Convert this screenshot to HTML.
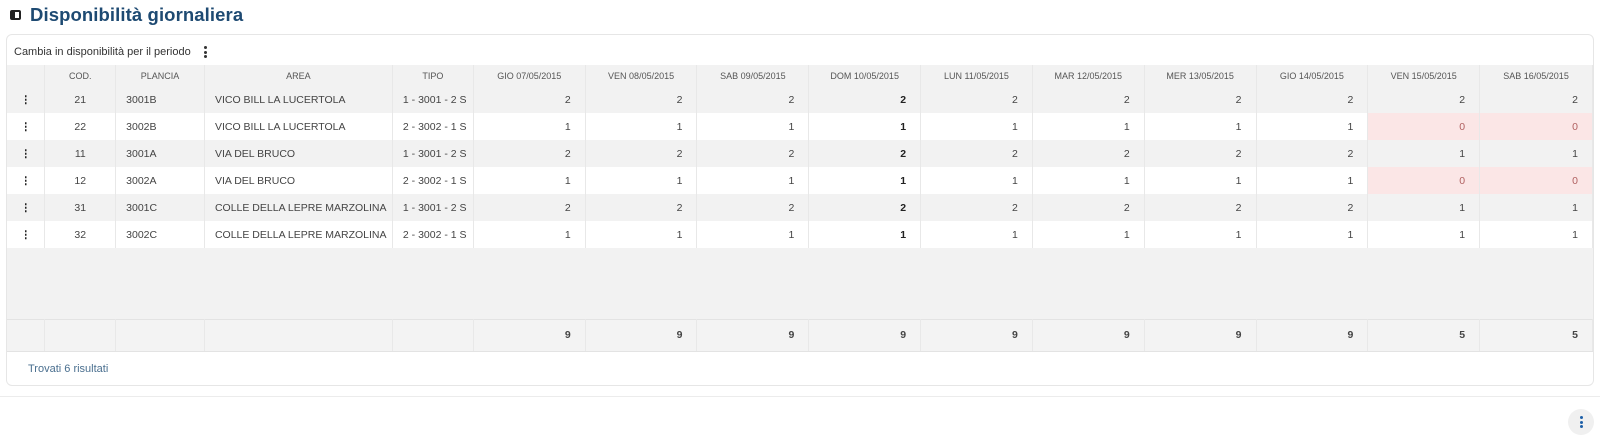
<!DOCTYPE html>
<html><head><meta charset="utf-8"><style>
*{box-sizing:border-box;margin:0;padding:0}
body{width:1600px;height:440px;background:#fff;font-family:"Liberation Sans",sans-serif;position:relative;overflow:hidden;color:#333}
.title{position:absolute;left:30px;top:4px;font-size:18.5px;color:#1e4a72;font-weight:bold;letter-spacing:0.1px}
.ticon{position:absolute;left:10px;top:10px;width:11px;height:10px;border:2px solid #222;border-radius:2px}
.ticon:after{content:"";position:absolute;left:0;top:0;width:3px;height:6px;background:#222}
.card{position:absolute;left:6px;top:34px;width:1588px;height:352px;border:1px solid #e6e6e6;border-radius:6px;background:#fff;overflow:hidden}
.sub{position:absolute;left:7px;top:11px;font-size:11px;color:#333}
.dots{position:absolute;width:3px}
.dots i{display:block;width:3px;height:3px;border-radius:50%;background:#333;margin-bottom:1.5px}
table{position:absolute;left:0;top:30px;border-collapse:collapse;table-layout:fixed;font-size:10.5px}
td,th{border-right:1px solid #e8e8e8;overflow:hidden;white-space:nowrap}
th{height:21px;background:#f2f2f2;font-weight:normal;color:#555;font-size:9px;text-align:center}
td{height:27px;color:#444}
tr.g td{background:#f2f2f2}
tr.w td{background:#fff}
td.n{text-align:right;padding-right:14px}
td.c{text-align:center}
td.l{padding-left:10px}
td.b{font-weight:bold;color:#222}
td.r{background:#fbe6e6!important;color:#b06060}
.foot td{height:32px;background:#f3f3f3;font-weight:bold;border-top:1px solid #e3e3e3;border-bottom:1px solid #e3e3e3}
.tro{position:absolute;left:21px;top:328px;font-size:11px;color:#4a6f8f}
.hr{position:absolute;left:0;top:396px;width:1600px;height:1px;background:#ececec}
.fab{position:absolute;left:1568px;top:409px;width:26px;height:26px;border-radius:50%;background:#f0f0f0}
</style></head><body>
<div class="ticon"></div>
<div class="title">Disponibilità giornaliera</div>
<div class="card">
<div class="sub">Cambia in disponibilità per il periodo</div>
<div class="dots" style="left:197px;top:11px"><i></i><i></i><i></i></div>
<table>
<colgroup><col style="width:38px"><col style="width:71px"><col style="width:89px"><col style="width:188px"><col style="width:81px"><col span="9" style="width:112px"><col style="width:113px"></colgroup>
<tr><th></th><th>COD.</th><th>PLANCIA</th><th>AREA</th><th>TIPO</th><th>GIO 07/05/2015</th><th>VEN 08/05/2015</th><th>SAB 09/05/2015</th><th>DOM 10/05/2015</th><th>LUN 11/05/2015</th><th>MAR 12/05/2015</th><th>MER 13/05/2015</th><th>GIO 14/05/2015</th><th>VEN 15/05/2015</th><th>SAB 16/05/2015</th></tr>
<tr class="g"><td class="c b">⋮</td><td class="c">21</td><td class="l">3001B</td><td class="l">VICO BILL LA LUCERTOLA</td><td class="l">1 - 3001 - 2 S</td><td class="n">2</td><td class="n">2</td><td class="n">2</td><td class="n b">2</td><td class="n">2</td><td class="n">2</td><td class="n">2</td><td class="n">2</td><td class="n">2</td><td class="n">2</td></tr>
<tr class="w"><td class="c b">⋮</td><td class="c">22</td><td class="l">3002B</td><td class="l">VICO BILL LA LUCERTOLA</td><td class="l">2 - 3002 - 1 S</td><td class="n">1</td><td class="n">1</td><td class="n">1</td><td class="n b">1</td><td class="n">1</td><td class="n">1</td><td class="n">1</td><td class="n">1</td><td class="n r">0</td><td class="n r">0</td></tr>
<tr class="g"><td class="c b">⋮</td><td class="c">11</td><td class="l">3001A</td><td class="l">VIA DEL BRUCO</td><td class="l">1 - 3001 - 2 S</td><td class="n">2</td><td class="n">2</td><td class="n">2</td><td class="n b">2</td><td class="n">2</td><td class="n">2</td><td class="n">2</td><td class="n">2</td><td class="n">1</td><td class="n">1</td></tr>
<tr class="w"><td class="c b">⋮</td><td class="c">12</td><td class="l">3002A</td><td class="l">VIA DEL BRUCO</td><td class="l">2 - 3002 - 1 S</td><td class="n">1</td><td class="n">1</td><td class="n">1</td><td class="n b">1</td><td class="n">1</td><td class="n">1</td><td class="n">1</td><td class="n">1</td><td class="n r">0</td><td class="n r">0</td></tr>
<tr class="g"><td class="c b">⋮</td><td class="c">31</td><td class="l">3001C</td><td class="l">COLLE DELLA LEPRE MARZOLINA</td><td class="l">1 - 3001 - 2 S</td><td class="n">2</td><td class="n">2</td><td class="n">2</td><td class="n b">2</td><td class="n">2</td><td class="n">2</td><td class="n">2</td><td class="n">2</td><td class="n">1</td><td class="n">1</td></tr>
<tr class="w"><td class="c b">⋮</td><td class="c">32</td><td class="l">3002C</td><td class="l">COLLE DELLA LEPRE MARZOLINA</td><td class="l">2 - 3002 - 1 S</td><td class="n">1</td><td class="n">1</td><td class="n">1</td><td class="n b">1</td><td class="n">1</td><td class="n">1</td><td class="n">1</td><td class="n">1</td><td class="n">1</td><td class="n">1</td></tr>
<tr><td colspan="15" style="height:71px;background:#f2f2f2;border:none"></td></tr>
<tr class="foot"><td></td><td></td><td></td><td></td><td></td><td class="n">9</td><td class="n">9</td><td class="n">9</td><td class="n">9</td><td class="n">9</td><td class="n">9</td><td class="n">9</td><td class="n">9</td><td class="n">5</td><td class="n">5</td></tr>
</table>
<div class="tro">Trovati 6 risultati</div>
</div>
<div class="hr"></div>
<div class="fab"><div class="dots" style="left:11.5px;top:7px"><i style="background:#1e5fa8"></i><i style="background:#1e5fa8"></i><i style="background:#1e5fa8"></i></div></div>
</body></html>
